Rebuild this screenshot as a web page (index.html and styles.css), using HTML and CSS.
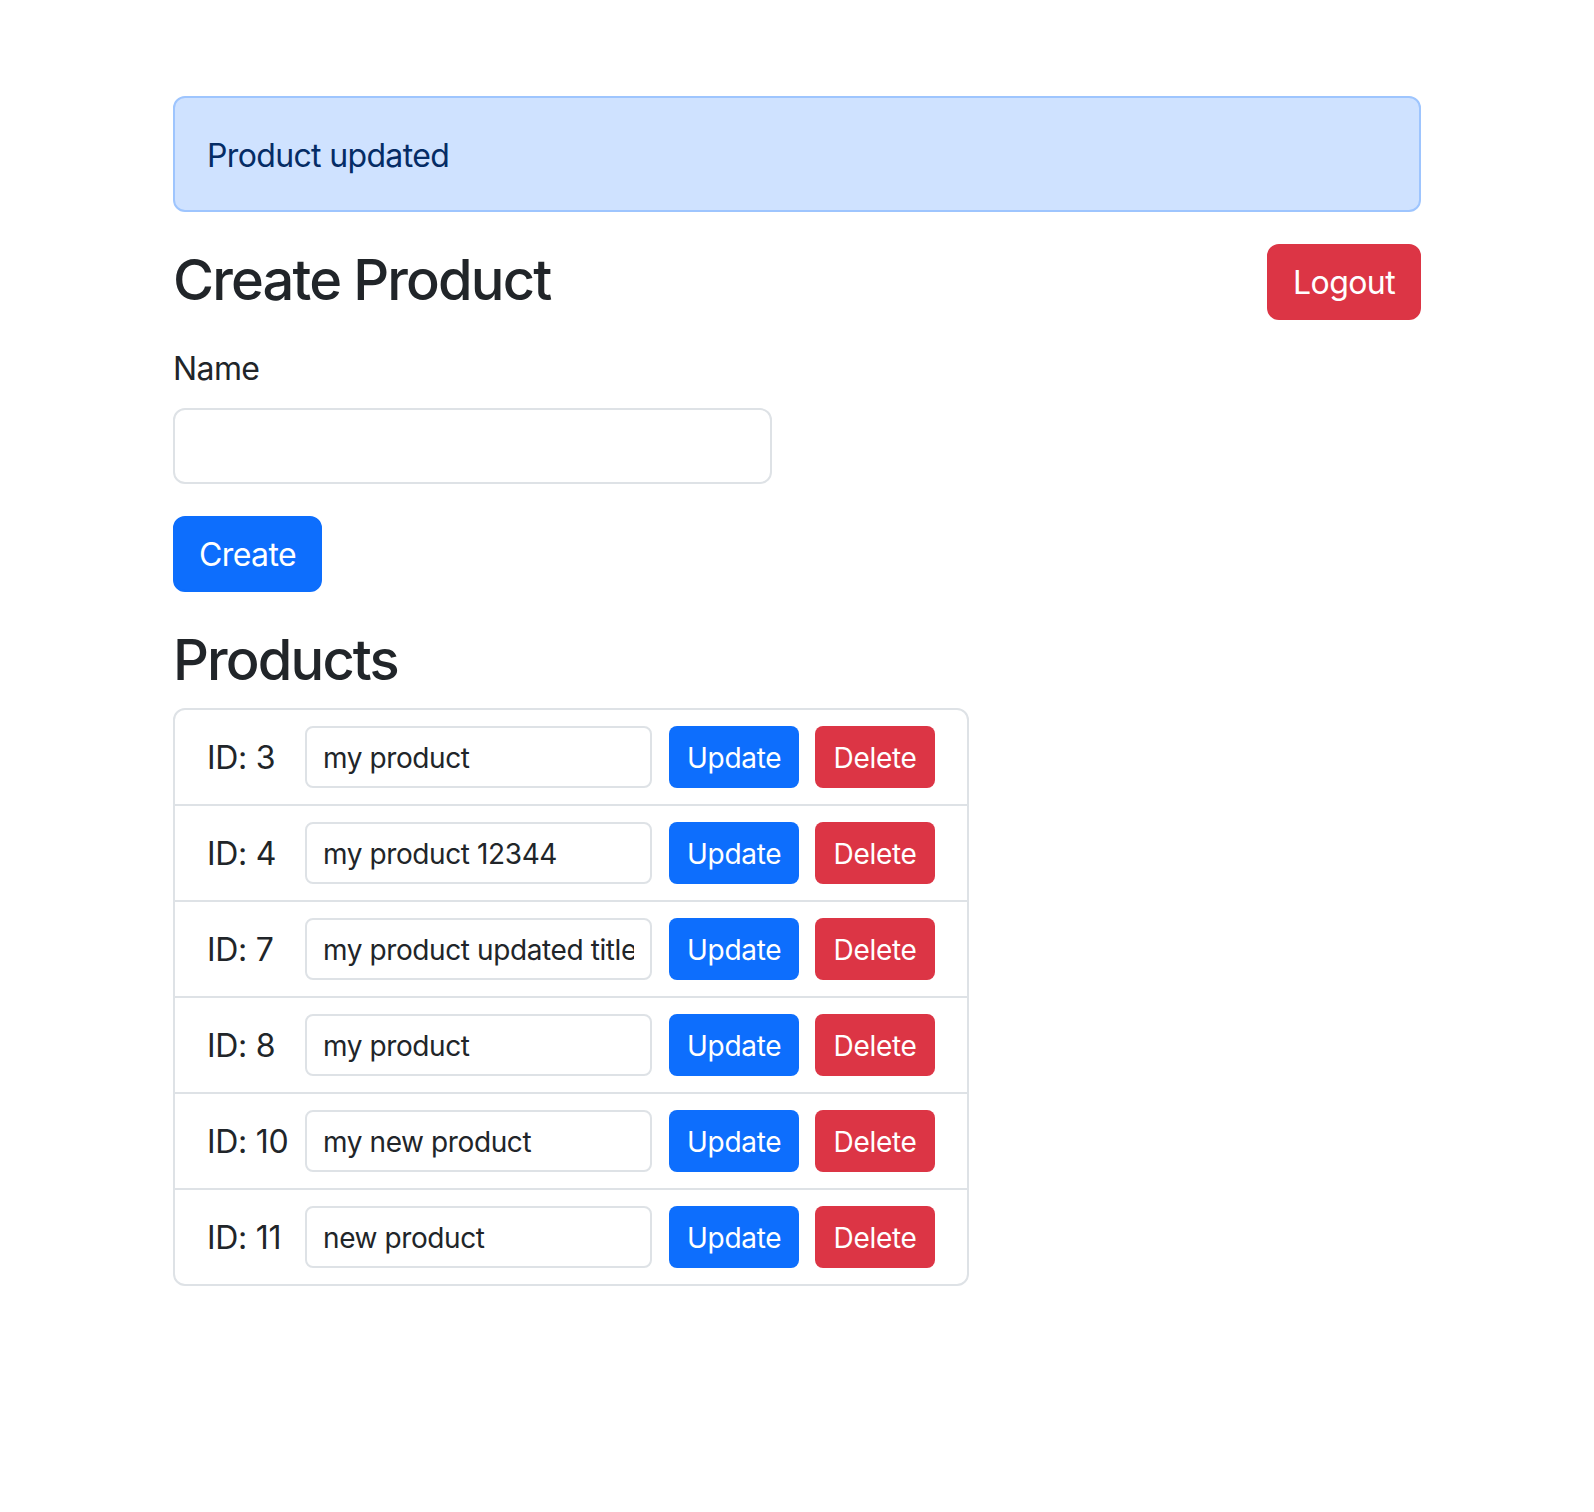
FILE: index.html
```html
<!DOCTYPE html>
<html lang="en">
<head>
<meta charset="utf-8">
<title>Products</title>
<link rel="stylesheet" href="styles.css">
</head>
<body>
<div class="container">
  <div class="alert">Product updated</div>

  <div class="header">
    <h2 class="title">Create Product</h2>
    <button class="btn btn-danger" type="button">Logout</button>
  </div>

  <form class="create-form">
    <div class="field">
      <label class="form-label" for="name">Name</label>
      <input class="form-control" id="name" type="text">
    </div>
    <button class="btn btn-primary" type="button">Create</button>
  </form>

  <h2 class="title">Products</h2>
  <ul class="list-group">
    <li class="list-item"><span class="item-id">ID: 3</span><input class="form-control-sm" type="text" value="my product"><button class="btn-sm btn-primary" type="button">Update</button><button class="btn-sm btn-danger" type="button">Delete</button></li>
    <li class="list-item"><span class="item-id">ID: 4</span><input class="form-control-sm" type="text" value="my product 12344"><button class="btn-sm btn-primary" type="button">Update</button><button class="btn-sm btn-danger" type="button">Delete</button></li>
    <li class="list-item"><span class="item-id">ID: 7</span><input class="form-control-sm" type="text" value="my product updated title"><button class="btn-sm btn-primary" type="button">Update</button><button class="btn-sm btn-danger" type="button">Delete</button></li>
    <li class="list-item"><span class="item-id">ID: 8</span><input class="form-control-sm" type="text" value="my product"><button class="btn-sm btn-primary" type="button">Update</button><button class="btn-sm btn-danger" type="button">Delete</button></li>
    <li class="list-item"><span class="item-id">ID: 10</span><input class="form-control-sm" type="text" value="my new product"><button class="btn-sm btn-primary" type="button">Update</button><button class="btn-sm btn-danger" type="button">Delete</button></li>
    <li class="list-item"><span class="item-id">ID: 11</span><input class="form-control-sm" type="text" value="new product"><button class="btn-sm btn-primary" type="button">Update</button><button class="btn-sm btn-danger" type="button">Delete</button></li>
  </ul>
</div>
</body>
</html>
```
FILE: styles.css
```css
* {
  box-sizing: border-box;
}

html, body {
  margin: 0;
  padding: 0;
  background: #ffffff;
}

body {
  font-family: Inter, "Noto Sans", "Liberation Sans", sans-serif;
  font-size: 32px;
  line-height: 48px;
  color: #212529;
}

.container {
  width: 1248px;
  margin: 96px auto 0;
}

.alert {
  background: #cfe2ff;
  border: 2px solid #9ec5fe;
  border-radius: 12px;
  color: #052c65;
  padding: 34px 32px 30px;
  margin-bottom: 32px;
  letter-spacing: -0.65px;
}

.header {
  display: flex;
  justify-content: space-between;
  align-items: flex-start;
  margin-bottom: 16px;
}

.title {
  margin: 0 0 16px;
  padding-top: 2px;
  height: 68px;
  font-size: 56px;
  line-height: 68px;
  font-weight: 500;
  letter-spacing: -1.85px;
}

.btn {
  font-family: inherit;
  font-size: 32px;
  line-height: 48px;
  padding: 13px 24px 11px;
  border: 2px solid transparent;
  border-radius: 12px;
  color: #ffffff;
  cursor: pointer;
  letter-spacing: -0.6px;
}

.btn-primary {
  background: #0d6efd;
  border-color: #0d6efd;
  color: #ffffff;
}

.btn-danger {
  background: #dc3545;
  border-color: #dc3545;
  color: #ffffff;
}

.create-form {
  margin-bottom: 32px;
}

.field {
  margin-bottom: 32px;
}

.form-label {
  display: block;
  margin-bottom: 16px;
  padding-top: 1px;
  height: 48px;
  letter-spacing: -0.6px;
}

.form-control {
  display: block;
  width: 599px;
  height: 76px;
  padding: 12px 24px;
  font-family: inherit;
  font-size: 32px;
  line-height: 48px;
  border: 2px solid #dee2e6;
  border-radius: 12px;
  background: #ffffff;
  color: #212529;
}

.list-group {
  display: inline-flex;
  flex-direction: column;
  margin: 0;
  padding: 0;
  list-style: none;
  border: 2px solid #dee2e6;
  border-radius: 12px;
}

.list-item {
  display: flex;
  align-items: center;
  padding: 16px 32px;
}

.list-item + .list-item {
  border-top: 2px solid #dee2e6;
}

.item-id {
  width: 82px;
  margin-right: 16px;
  padding-top: 2px;
  letter-spacing: -0.3px;
  white-space: nowrap;
}

.form-control-sm {
  width: 347px;
  height: 62px;
  padding: 9px 16px 7px;
  margin-right: 17px;
  font-family: inherit;
  font-size: 28px;
  line-height: 42px;
  border: 2px solid #dee2e6;
  border-radius: 8px;
  background: #ffffff;
  color: #212529;
  letter-spacing: -0.4px;
}

.btn-sm {
  height: 62px;
  font-family: inherit;
  font-size: 28px;
  line-height: 42px;
  padding: 9px 16px 7px;
  border: 2px solid transparent;
  border-radius: 8px;
  cursor: pointer;
  letter-spacing: -0.3px;
}

.btn-sm.btn-primary {
  width: 130px;
  margin-right: 16px;
}

.btn-sm.btn-danger {
  width: 120px;
}
```
